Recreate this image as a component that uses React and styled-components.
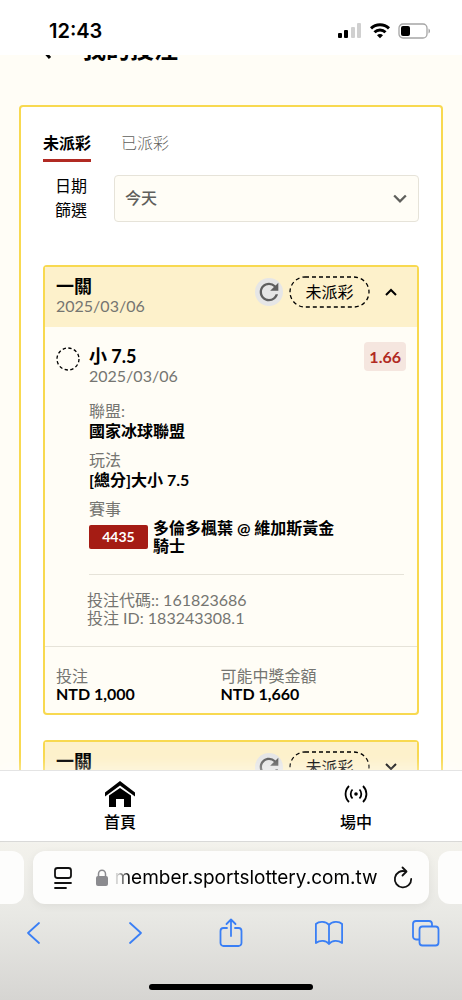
import React from "react"
import styled, { createGlobalStyle } from "styled-components"
import { MdRefresh } from "react-icons/md"

const GlobalStyle = createGlobalStyle`
  * {
    box-sizing: border-box;
  }
  body {
    margin: 0;
    background: #fff;
    color: #000;
    font-family: Lato, "Noto Sans CJK TC", sans-serif;
    font-size: 16px;
    line-height: 20px;
  }
  button, select {
    font: inherit;
    color: inherit;
    margin: 0;
    padding: 0;
    border: 0;
    background: none;
  }
  a {
    color: inherit;
    text-decoration: none;
  }
  svg {
    display: block;
  }
`

const Chevron = ({ up, size = 12, width = 2 }) => (
  <svg width={size} height={size} viewBox="0 0 12 12" fill="none" stroke="currentColor" strokeWidth={width}>
    <path d={up ? "M1 9l5-5 5 5" : "M1 3l5 5 5-5"} />
  </svg>
)

const StatusIcons = () => (
  <Icons>
    <svg width="24" height="16" viewBox="0 0 24 16">
      <rect x="0" y="10" width="4" height="5" rx="1" />
      <rect x="6" y="7" width="4" height="8" rx="1" />
      <rect x="13" y="4" width="4" height="11" rx="1" fill="#d0d0d0" />
      <rect x="19" y="0" width="4" height="15" rx="1" fill="#d0d0d0" />
    </svg>
    <svg width="20" height="16" viewBox="0 0 20 16" fill="none" stroke="#000" strokeWidth="3">
      <path d="M1 5.400C6 .6 14 .6 19 5.400" />
      <path d="M4.500 9.200c3-3 8-3 11 0" />
      <path d="M7 12.200c1.600-1.500 4.400-1.500 6 0l-3 3z" fill="#000" stroke="none" />
    </svg>
    <svg width="33" height="16" viewBox="0 0 33 16">
      <rect x="1" y="1" width="28" height="14" rx="4" fill="none" stroke="#a5a5a5" strokeWidth="1.3" />
      <rect x="3" y="3" width="9" height="10" rx="2" />
      <path d="M30.500 5.500c2 .8 2 4.200 0 5z" fill="#a5a5a5" />
    </svg>
  </Icons>
)

const BetHeader = ({ open }) => (
  <CardHeader>
    <div>
      <BetTitle>一關</BetTitle>
      <Muted>2025/03/06</Muted>
    </div>
    <HeaderActions>
      <RefreshButton aria-label="重新整理">
        <MdRefresh size={30} />
      </RefreshButton>
      <StatusPill>
        <svg width="81" height="32" fill="none" stroke="#000" strokeWidth="1.3" strokeDasharray="4 3">
          <rect x="1" y="1" width="79" height="30" rx="15" />
        </svg>
        未派彩
      </StatusPill>
      <ToggleButton aria-label="展開" aria-expanded={open}>
        <Chevron up={open} />
      </ToggleButton>
    </HeaderActions>
  </CardHeader>
)

const App = () => {
  return (
    <Screen>
      <GlobalStyle />
      <StatusBar>
        <Clock>12:43</Clock>
        <StatusIcons />
      </StatusBar>

      <Page>
        <PageHeader>
          <BackButton aria-label="返回">
            <svg width="12" height="20" viewBox="0 0 12 20" fill="none" stroke="#000" strokeWidth="3">
              <path d="M10 1l-8 9 8 9" />
            </svg>
          </BackButton>
          <h1>我的投注</h1>
        </PageHeader>

        <Panel>
          <Tabs>
            <Tab $active>未派彩</Tab>
            <Tab>已派彩</Tab>
          </Tabs>

          <Filter>
            <FilterLabel htmlFor="date">日期篩選</FilterLabel>
            <SelectBox>
              <select id="date" defaultValue="today">
                <option value="today">今天</option>
              </select>
              <Chevron size={14} />
            </SelectBox>
          </Filter>

          <Card>
            <BetHeader open />
            <Selection>
              <svg width="24" height="24" viewBox="0 0 24 24" fill="none" stroke="#000" strokeWidth="1.3">
                <circle cx="12" cy="12" r="11" strokeDasharray="3.300 2.460" />
              </svg>
              <SelectionName>
                <BetTitle>小 7.5</BetTitle>
                <Muted>2025/03/06</Muted>
              </SelectionName>
              <Odds>1.66</Odds>
            </Selection>
            <Details>
              <div>
                <Muted>聯盟:</Muted>
                <Strong>國家冰球聯盟</Strong>
              </div>
              <div>
                <Muted>玩法</Muted>
                <Strong>[總分]大小 7.5</Strong>
              </div>
              <div>
                <Muted>賽事</Muted>
                <Match>
                  <MatchCode>4435</MatchCode>
                  <MatchName>多倫多楓葉 @ 維加斯黃金騎士</MatchName>
                </Match>
              </div>
            </Details>
            <BetCodes>
              <div>投注代碼:: 161823686</div>
              <div>投注 ID: 183243308.1</div>
            </BetCodes>
            <Totals>
              <div>
                <Muted>投注</Muted>
                <Strong>NTD 1,000</Strong>
              </div>
              <div>
                <Muted>可能中獎金額</Muted>
                <Strong>NTD 1,660</Strong>
              </div>
            </Totals>
          </Card>

          <Card>
            <BetHeader open={false} />
          </Card>
        </Panel>
      </Page>

      <BottomNav>
        <NavLink href="#home">
          <svg width="30" height="28" viewBox="0 0 30 28">
            <path d="M15 1L0 12.500v4L15 5.500l15 11v-4z" />
            <path d="M15 8L4 15.500V27h7v-8h8v8h7V15.500z" />
          </svg>
          首頁
        </NavLink>
        <NavLink href="#live">
          <svg width="24" height="28" viewBox="0 0 24 28" fill="none" stroke="#000" strokeWidth="1.8">
            <circle cx="12" cy="14" r="1.800" fill="#000" stroke="none" />
            <path d="M8.500 9.500c-2.400 2.500-2.400 6.500 0 9M15.500 9.500c2.400 2.500 2.400 6.500 0 9" />
            <path d="M5 6c-4.600 4.500-4.600 11.500 0 16M19 6c4.600 4.500 4.600 11.500 0 16" />
          </svg>
          場中
        </NavLink>
      </BottomNav>

      <Browser>
        <AddressRow>
          <SideTab $left />
          <AddressBar>
            <IconButton aria-label="頁面選單">
              <svg width="20" height="24" viewBox="0 0 20 24" fill="none" stroke="#111" strokeWidth="1.8" strokeLinecap="round">
                <rect x="2" y="2" width="16" height="10" rx="2.500" />
                <path d="M2 17h16M2 22h11" />
              </svg>
            </IconButton>
            <Url>
              <svg width="12" height="17" viewBox="0 0 12 17">
                <path d="M2.500 8V5a3.500 3.800 0 017 0v3" fill="none" stroke="#8b8b8f" strokeWidth="1.5" />
                <rect x="0" y="7" width="12" height="10" rx="2" fill="#8b8b8f" />
              </svg>
              <span>member.sportslottery.com.tw</span>
            </Url>
            <IconButton aria-label="重新載入">
              <svg width="20" height="24" viewBox="0 0 20 24" fill="none" stroke="#111" strokeWidth="1.8" strokeLinecap="round" strokeLinejoin="round">
                <path d="M12.500 5.400A8.200 8.200 0 1 0 18.200 13" />
                <path d="M9.500 1.500l4 4-4 4" />
              </svg>
            </IconButton>
          </AddressBar>
          <SideTab />
        </AddressRow>
        <Toolbar>
          <button aria-label="上一頁">
            <svg width="28" height="30" viewBox="0 0 28 30">
              <path d="M17 5L6 15l11 10" />
            </svg>
          </button>
          <button aria-label="下一頁">
            <svg width="28" height="30" viewBox="0 0 28 30">
              <path d="M10 5l11 10-11 10" />
            </svg>
          </button>
          <button aria-label="分享">
            <svg width="28" height="30" viewBox="0 0 28 30">
              <path d="M10 10H6.500A3 3 0 003.500 13v12a3 3 0 003 3h15a3 3 0 003-3V13a3 3 0 00-3-3H18" />
              <path d="M14 18V1.500M9.500 6L14 1.500 18.500 6" />
            </svg>
          </button>
          <button aria-label="書籤">
            <svg width="28" height="30" viewBox="0 0 28 30">
              <path d="M14 7C11 3 4 3 .9 6v19c4-3 10-3 13.100 1 3.100-4 9.100-4 13.100-1V6C24 3 17 3 14 7zM14 7v19" />
            </svg>
          </button>
          <button aria-label="分頁">
            <svg width="28" height="30" viewBox="0 0 28 30">
              <rect x="7.500" y="8.500" width="19" height="19" rx="3" />
              <path d="M7 21.500H4a3 3 0 01-3-3V6a3 3 0 013-3h13a3 3 0 013 3v2" />
            </svg>
          </button>
        </Toolbar>
        <HomeIndicator />
      </Browser>
    </Screen>
  )
}

export default App

// styles

const Screen = styled.div`
  display: flex;
  flex-direction: column;
  height: 100vh;
  overflow: hidden;
`
const StatusBar = styled.header`
  display: flex;
  align-items: center;
  justify-content: space-between;
  flex: none;
  height: 55px;
  padding: 7px 31px 0 49px;
`
const Clock = styled.span`
  font-family: Inter, sans-serif;
  font-size: 20px;
  font-weight: 600;
`
const Icons = styled.div`
  display: flex;
  align-items: center;
  gap: 8px;
`
const Page = styled.main`
  flex: 1;
  min-height: 0;
  overflow: hidden;
  background: #fffdf6;
`
// scrolled most of the way under the status bar
const PageHeader = styled.div`
  display: flex;
  align-items: center;
  gap: 30px;
  height: 32px;
  margin: -22px 0 40px;
  padding: 0 40px;

  h1 {
    margin: 0;
    font-size: 24px;
    line-height: 32px;
    font-weight: 700;
  }
`
const BackButton = styled.button`
  flex: none;
`
const Panel = styled.section`
  margin: 0 19px;
  padding: 24px 22px;
  border: 2px solid #f8d950;
  border-radius: 4px;
  background: #fff;
`
const Tabs = styled.nav`
  display: flex;
  gap: 30px;
`
const Tab = styled.button`
  height: 31px;
  padding-bottom: 4px;
  border-bottom: 3px solid ${p => (p.$active ? "#b12a23" : "transparent")};
  color: ${p => (p.$active ? "#000" : "#5f5f5c")};
  font-weight: ${p => (p.$active ? 700 : 300)};
`
const Filter = styled.div`
  display: flex;
  align-items: center;
  gap: 26px;
  margin: 12px 0 43px 12px;
`
const FilterLabel = styled.label`
  flex: none;
  width: 33px;
  line-height: 24px;
`
const SelectBox = styled.div`
  position: relative;
  flex: 1;
  color: #5f5f5c;

  select {
    appearance: none;
    display: block;
    width: 100%;
    height: 47px;
    padding: 0 10px;
    border: 1px solid #e6e3d9;
    border-radius: 4px;
    background: #fffdf6;
    font-weight: 500;
  }
  svg {
    position: absolute;
    right: 12px;
    top: 17px;
    pointer-events: none;
  }
`
const Card = styled.article`
  margin-bottom: 25px;
  border: 2px solid #f8d950;
  border-radius: 4px;
  background: #fffdf6;
`
const CardHeader = styled.div`
  display: flex;
  justify-content: space-between;
  padding: 9px 11px 11px;
  background: #fdf1cb;
`
const BetTitle = styled.div`
  font-size: 18px;
  font-weight: 700;
`
const Muted = styled.div`
  color: #757571;
  font-weight: 400;
`
const Strong = styled.div`
  font-weight: 700;
`
const HeaderActions = styled.div`
  display: flex;
  align-items: center;
  align-self: flex-start;
  gap: 6px;
`
const RefreshButton = styled.button`
  display: flex;
  align-items: center;
  justify-content: center;
  width: 28px;
  height: 28px;
  border-radius: 50%;
  background: #e6e6e6;
  color: #5f5f5f;
`
const StatusPill = styled.span`
  position: relative;
  width: 81px;
  line-height: 32px;
  text-align: center;

  svg {
    position: absolute;
    top: 0;
    left: 0;
  }
`
const ToggleButton = styled.button`
  padding: 9px;
`
const Selection = styled.div`
  display: flex;
  align-items: flex-start;
  gap: 9px;
  padding: 15px 11px;

  svg {
    flex: none;
    margin-top: 5px;
  }
`
const SelectionName = styled.div`
  flex: 1;
  padding-top: 4px;
`
const Odds = styled.span`
  padding: 0 5px;
  border-radius: 4px;
  background: #f5e6df;
  color: #b12a23;
  font-weight: 700;
  line-height: 29px;
`
const Details = styled.div`
  display: flex;
  flex-direction: column;
  gap: 9px;
  margin: 0 13px 0 44px;
  padding-bottom: 19px;
  border-bottom: 1px solid #e6e3d9;
`
const Match = styled.div`
  display: flex;
  align-items: center;
  gap: 5px;
`
const MatchCode = styled.span`
  flex: none;
  width: 59px;
  border-radius: 2px;
  background: #a51c14;
  color: #fff;
  font-size: 14px;
  font-weight: 700;
  line-height: 24px;
  text-align: center;
`
const MatchName = styled.span`
  max-width: 190px;
  font-weight: 700;
  line-height: 18px;
`
const BetCodes = styled.div`
  padding: 16px 42px 19px;
  border-bottom: 1px solid #e6e3d9;
  color: #757571;
  line-height: 18px;
`
const Totals = styled.div`
  display: grid;
  grid-template-columns: 47% 53%;
  padding: 20px 11px 10px;
  line-height: 18px;
`
const BottomNav = styled.nav`
  position: relative;
  display: flex;
  justify-content: space-between;
  flex: none;
  height: 71px;
  padding: 0 90px 0 104px;
  border-top: 1px solid #e4e4e4;
  background: #fff;
  box-shadow: 0 -4px 12px rgba(255, 255, 255, 0.4);
`
const NavLink = styled.a`
  display: flex;
  flex-direction: column;
  align-items: center;
  gap: 4px;
  padding-top: 9px;
  font-weight: 500;
`
const Browser = styled.footer`
  flex: none;
  padding-bottom: 10px;
  border-top: 1px solid #d6d6d4;
  background: linear-gradient(#f3f2ec, #e9e9e5 45%, #d6d5d2);
`
const AddressRow = styled.div`
  display: flex;
  gap: 9px;
  padding-top: 9px;
`
const SideTab = styled.div`
  flex: none;
  width: 24px;
  height: 53px;
  border-radius: ${p => (p.$left ? "0 12px 12px 0" : "12px 0 0 12px")};
  background: #fdfdfc;
`
const AddressBar = styled.div`
  display: flex;
  flex: 1;
  align-items: center;
  justify-content: space-between;
  min-width: 0;
  height: 53px;
  padding: 0 16px 0 20px;
  border-radius: 12px;
  background: #fdfdfc;
  box-shadow: 0 2px 8px rgba(0, 0, 0, 0.06);
`
const IconButton = styled.button`
  flex: none;
`
const Url = styled.div`
  display: flex;
  align-items: center;
  gap: 6px;
  padding-left: 8px;
  font-family: Inter, sans-serif;
  font-size: 19px;
  line-height: 28px;
  white-space: nowrap;

  span {
    mask-image: linear-gradient(to right, transparent, #000 16px);
  }
`
const Toolbar = styled.div`
  display: flex;
  justify-content: space-between;
  padding: 14px 22px 36px;

  svg {
    fill: none;
    stroke: #3a7ff5;
    stroke-width: 1.8;
    stroke-linecap: round;
    stroke-linejoin: round;
  }
`
const HomeIndicator = styled.div`
  width: 164px;
  height: 6px;
  margin: 0 auto;
  border-radius: 3px;
  background: #000;
`
